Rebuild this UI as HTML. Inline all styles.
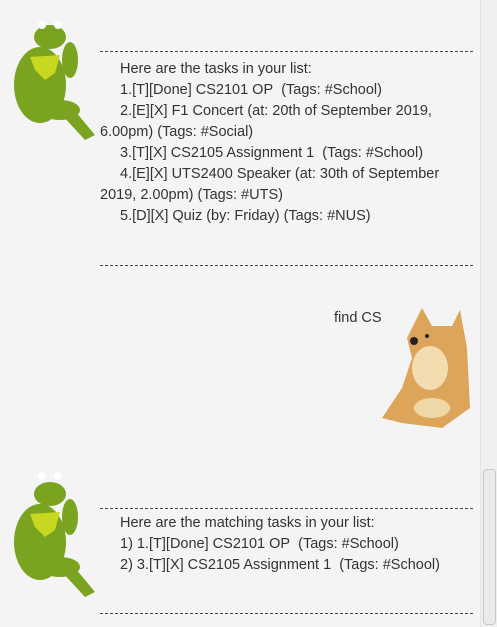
<!DOCTYPE html>
<html><head><style>
body{margin:0;width:497px;height:627px;background:#f4f4f4;overflow:hidden;position:relative;font-family:"Liberation Sans",sans-serif;font-size:14.5px;color:#333}
.t{position:absolute;white-space:nowrap;line-height:21px}
.sep{position:absolute;left:100px;width:373px;height:0;border-top:1px dashed #444}
.sb{position:absolute;left:480px;top:0;width:17px;height:627px;background:#f0f0f0;border-left:1px solid #e4e4e4}
.th{position:absolute;left:483px;top:469px;width:11px;height:154px;background:#ebebeb;border:1px solid #c8c8c8;border-radius:4px}
</style></head><body>
<svg style="position:absolute;left:0;top:15px" width="100" height="125" viewBox="0 0 100 125">
<g fill="#7aa320"><ellipse cx="50" cy="22" rx="16" ry="12"/><ellipse cx="40" cy="70" rx="26" ry="38"/><ellipse cx="60" cy="95" rx="20" ry="10"/><path d="M70 90 L95 120 L85 125 L62 100Z"/><ellipse cx="70" cy="45" rx="8" ry="18"/></g>
<path d="M30 42 L60 40 L55 58 L45 65 L35 55Z" fill="#c8d820"/>
<circle cx="42" cy="10" r="4" fill="#fff"/><circle cx="58" cy="10" r="4" fill="#fff"/>
</svg>
<svg style="position:absolute;left:0;top:472px" width="100" height="125" viewBox="0 0 100 125">
<g fill="#7aa320"><ellipse cx="50" cy="22" rx="16" ry="12"/><ellipse cx="40" cy="70" rx="26" ry="38"/><ellipse cx="60" cy="95" rx="20" ry="10"/><path d="M70 90 L95 120 L85 125 L62 100Z"/><ellipse cx="70" cy="45" rx="8" ry="18"/></g>
<path d="M30 42 L60 40 L55 58 L45 65 L35 55Z" fill="#c8d820"/>
<circle cx="42" cy="4" r="4" fill="#fff"/><circle cx="58" cy="4" r="4" fill="#fff"/>
</svg>
<svg style="position:absolute;left:382px;top:308px" width="90" height="125" viewBox="0 0 90 125">
<g fill="#dca55a"><path d="M40 0 L50 18 L70 18 L78 2 L85 40 L88 100 L60 120 L20 115 L0 110 L20 80 L30 50 L25 30Z"/></g>
<ellipse cx="48" cy="60" rx="18" ry="22" fill="#f2dcb0"/>
<ellipse cx="50" cy="100" rx="18" ry="10" fill="#f0d8a8"/>
<circle cx="32" cy="33" r="4" fill="#222"/><circle cx="45" cy="28" r="2" fill="#222"/>
</svg>
<div class="sep" style="top:51px"></div>
<div class="t" style="left:120px;top:59px">Here are the tasks in your list:</div>
<div class="t" style="left:120px;top:80px">1.[T][Done] CS2101 OP&nbsp; (Tags: #School)</div>
<div class="t" style="left:120px;top:101px">2.[E][X] F1 Concert (at: 20th of September 2019,</div>
<div class="t" style="left:100px;top:122px">6.00pm) (Tags: #Social)</div>
<div class="t" style="left:120px;top:143px">3.[T][X] CS2105 Assignment 1&nbsp; (Tags: #School)</div>
<div class="t" style="left:120px;top:164px">4.[E][X] UTS2400 Speaker (at: 30th of September</div>
<div class="t" style="left:100px;top:185px">2019, 2.00pm) (Tags: #UTS)</div>
<div class="t" style="left:120px;top:206px">5.[D][X] Quiz (by: Friday) (Tags: #NUS)</div>
<div class="sep" style="top:265px"></div>
<div class="t" style="left:334px;top:308px">find CS</div>
<div class="sep" style="top:508px"></div>
<div class="t" style="left:120px;top:513px">Here are the matching tasks in your list:</div>
<div class="t" style="left:120px;top:534px">1) 1.[T][Done] CS2101 OP&nbsp; (Tags: #School)</div>
<div class="t" style="left:120px;top:555px">2) 3.[T][X] CS2105 Assignment 1&nbsp; (Tags: #School)</div>
<div class="sep" style="top:613px"></div>
<div class="sb"></div><div class="th"></div>
</body></html>
